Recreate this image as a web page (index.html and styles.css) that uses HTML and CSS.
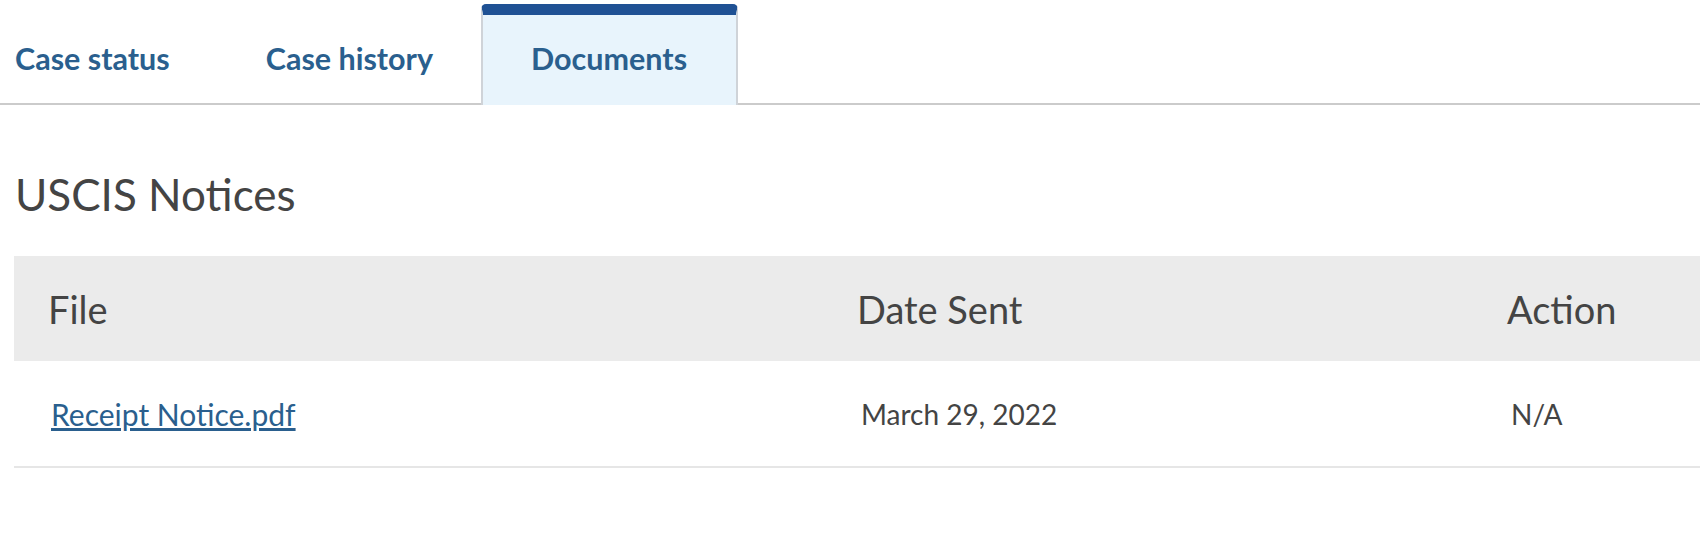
FILE: index.html
```html
<!DOCTYPE html>
<html lang="en">
<head>
    <meta charset="UTF-8">
    <meta name="viewport" content="width=device-width, initial-scale=1.0">
    <title>Case Documents</title>
    <link rel="stylesheet" href="styles.css">
</head>
<body>
    <nav class="tabs">
        <a class="tab" href="#status">Case status</a>
        <a class="tab" href="#history">Case history</a>
        <a class="tab active" href="#documents">Documents</a>
    </nav>

    <section class="notices">
        <h2>USCIS Notices</h2>
        <table class="notice-table">
            <thead>
                <tr>
                    <th class="col-file">File</th>
                    <th class="col-date">Date Sent</th>
                    <th class="col-action">Action</th>
                </tr>
            </thead>
            <tbody>
                <tr>
                    <td><a href="#receipt">Receipt Notice.pdf</a></td>
                    <td>March 29, 2022</td>
                    <td>N/A</td>
                </tr>
            </tbody>
        </table>
    </section>
</body>
</html>
```

FILE: styles.css
```css
body {
    font-family: Lato, "Liberation Sans", sans-serif;
    margin: 0;
    color: #444;
    background: #fff;
}
.tabs {
    display: flex;
    align-items: flex-end;
    height: 101px;
    padding-top: 2px;
    border-bottom: 2px solid #cbcbcb;
}
.tab {
    position: relative;
    top: 2px;
    display: flex;
    align-items: center;
    box-sizing: border-box;
    height: 101px;
    padding: 0 46px 5px 46px;
    font-size: 30.5px;
    font-weight: bold;
    color: #2a5f8e;
    text-decoration: none;
    border-top: 11px solid transparent;
    border-left: 2px solid transparent;
    border-right: 2px solid transparent;
    border-radius: 5px 5px 0 0;
}
.tab:first-child {
    padding-left: 13px;
}
.tab.active {
    padding-left: 48px;
    padding-right: 49px;
    background-color: #e8f4fc;
    border-top-color: #1f5194;
    border-left-color: #cfd3d8;
    border-right-color: #cfd3d8;
}
.notices {
    padding: 0 0 0 14px;
}
.notices h2 {
    margin: 61px 0 34px 1px;
    font-size: 44px;
    font-weight: normal;
    color: #444;
    line-height: 56px;
}
.notice-table {
    width: 100%;
    border-collapse: collapse;
}
.notice-table th {
    height: 105px;
    padding: 0;
    background-color: #ebebeb;
    font-size: 38px;
    font-weight: normal;
    text-align: left;
    color: #444;
}
.notice-table td {
    height: 105px;
    padding: 0;
    font-size: 28px;
    color: #444;
    border-bottom: 2px solid #e6e6e6;
}
.notice-table th.col-file {
    width: 809px;
    padding-left: 34px;
}
.notice-table th.col-date {
    width: 650px;
    padding-left: 0;
}
.notice-table td:first-child {
    padding-left: 37px;
}
.notice-table td:nth-child(2),
.notice-table td:nth-child(3) {
    padding-left: 4px;
}
.notice-table a {
    font-size: 30px;
    color: #2a5f8e;
}
```
